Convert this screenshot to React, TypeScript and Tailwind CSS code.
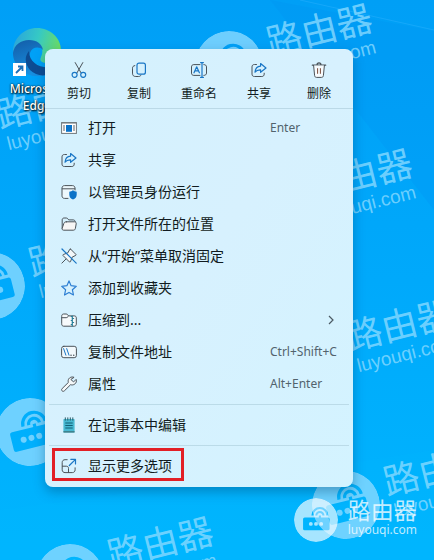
import type { ReactNode } from "react";

interface MenuEntry {
  label: string;
  icon: ReactNode;
  shortcut?: string;
  submenu?: boolean;
  highlighted?: boolean;
}

function Icon({ children, size = 16 }: { children: ReactNode; size?: number }) {
  return (
    <svg
      width={size}
      height={size}
      viewBox="0 0 16 16"
      fill="none"
      stroke="#4b5359"
      strokeWidth="1"
      strokeLinecap="round"
      strokeLinejoin="round"
      className="shrink-0"
      aria-hidden="true"
    >
      {children}
    </svg>
  );
}

const CutIcon = () => (
  <Icon>
    <path d="M4.2 .6 10 10.8M11.8 .6 6 10.8" />
    <g stroke="#1976c5" strokeWidth="1.2">
      <circle cx="3.6" cy="12.8" r="2.5" />
      <circle cx="12.2" cy="12.8" r="2.5" />
    </g>
  </Icon>
);

const CopyIcon = () => (
  <Icon>
    <path d="M3.8 3.6C2.2 3.8 1.5 4.7 1.5 6.2v4.9c0 2.3 1 3.4 3.3 3.4h2.8c1.2 0 2-.5 2.4-1.4" />
    <rect x="6" y="1.2" width="8.4" height="11" rx="2" stroke="#1976c5" strokeWidth="1.2" />
  </Icon>
);

const RenameIcon = () => (
  <Icon>
    <path d="M9 2.6H2.8C1.4 2.6.5 3.5.5 4.9v6.2c0 1.4.9 2.3 2.3 2.3H9M12.8 2.6c1.8 0 2.7.9 2.7 2.3v6.2c0 1.4-.9 2.3-2.7 2.3" />
    <g stroke="#1976c5" strokeWidth="1.2">
      <path d="M3 10.8 5.7 4.8 8.4 10.8M3.9 8.8h3.6M11 .6v14.8M9.6 .6h2.8M9.6 15.4h2.8" />
    </g>
  </Icon>
);

const ShareIcon = () => (
  <Icon>
    <path d="M5.5 2.5H3.4C1.9 2.5 1 3.4 1 4.9v7.2c0 1.5.9 2.4 2.4 2.4h7.4c1.5 0 2.4-.9 2.4-2.4v-.9" />
    <path
      d="M9.6 1.5 15 6 9.6 10.3V7.8C7 7.7 5.3 8.3 4 10.2 4.3 6.4 6.2 4.3 9.6 4.1Z"
      stroke="#1976c5"
      strokeWidth="1.2"
    />
  </Icon>
);

const DeleteIcon = () => (
  <Icon>
    <path d="M1.3 3.2h13.4M6 3C6 1.6 6.8.8 8 .8s2 .8 2 2.2" strokeWidth="1.2" />
    <path d="m2.6 3.4 1 10.1c.1 1.2.8 1.9 2 1.9h4.8c1.2 0 1.9-.7 2-1.9l1-10.1" fill="#f7fbfd" />
    <path d="M6.6 6.6v4.8M9.4 6.6v4.8" stroke="#7a4a38" />
  </Icon>
);

const OpenIcon = () => (
  <Icon>
    <rect x=".6" y="2.6" width="14.8" height="10.8" fill="#fff" stroke="#6f777b" strokeLinejoin="miter" />
    <path d="M1 3h14" stroke="#6f777b" />
    <rect x="5" y="5" width="6" height="6.8" fill="#0873c9" stroke="none" />
    <path d="M2.5 6h1M2.5 8h1M2.5 10h1M12.5 6h1M12.5 8h1M12.5 10h1" />
  </Icon>
);

const AdminIcon = () => (
  <Icon>
    <path
      d="M7 14.4H3.6C2 14.4 1 13.4 1 11.8V4.2c0-1.6 1-2.6 2.6-2.6h7.8c1.6 0 2.6 1 2.6 2.6V6"
      fill="#edf8fc"
    />
    <path d="M1.2 4.8H13.8" />
    <path
      d="M12 6.3c1 .9 2.2 1.4 3.7 1.5v3c0 2.3-1.4 3.8-3.7 4.7-2.3-.9-3.7-2.4-3.7-4.7v-3c1.5-.1 2.7-.6 3.7-1.5Z"
      fill="#0b72c7"
      stroke="none"
    />
  </Icon>
);

const FolderIcon = () => (
  <Icon>
    <path d="M1.2 12.5V3.9c0-1.2.8-1.9 1.9-1.9h2.2c.7 0 1.2.3 1.6.9l.8 1h4.6c1.2 0 1.9.8 1.9 1.9" />
    <path
      d="M5.3 5.8h8.2c1.2 0 1.9.8 1.7 2l-.8 4.6c-.2 1.2-1 1.8-2.1 1.8H2.7c-1.2 0-1.8-.8-1.5-2l1.6-4.7c.4-1.1 1.2-1.7 2.5-1.7Z"
      fill="#f7f6f5"
    />
  </Icon>
);

const UnpinIcon = () => (
  <Icon>
    <path
      d="m9.7 1.2 5.2 5.2c.3.4.2.8-.2 1l-3.5 1.7-1.7 4.5c-.2.6-.7.7-1.1.3L2.1 7.6c-.4-.4-.3-.9.3-1.1l4.5-1.7 1.8-3.4c.2-.4.6-.5 1-.2Z"
      fill="#f3f7f9"
    />
    <path d="M5 11 .9 15.1" />
    <path d="m1 1 14.2 14.2" stroke="#1976c5" strokeWidth="1.2" />
  </Icon>
);

const StarIcon = () => (
  <Icon>
    <path
      d="m8 .9 2.1 4.8 5.2.6-3.9 3.5 1.1 5.2L8 12.4 3.5 15l1.1-5.2L.7 6.3l5.2-.6Z"
      stroke="#2d7fd3"
      strokeWidth="1.2"
    />
  </Icon>
);

const ZipIcon = () => (
  <Icon>
    <path
      d="M.7 4c0-1.300.8-2 2-2h2.400c.8 0 1.300.3 1.700.9l.8 1h5.700c1.300 0 2 .8 2 2v6.300c0 1.300-.8 2-2 2H2.700c-1.200 0-2-.8-2-2Z"
      fill="#f7fafb"
    />
    <path d="M1 5.700h4c1.200 0 1.800-.7 2.500-1.600" />
    <path
      d="M11.300 4v10M10.200 4.500h1M11.300 6.500h1.300M10.200 8.500h1M11.300 10.500h1.300M10.200 12.500h1"
      stroke="#267f9a"
      strokeWidth="1.2"
    />
  </Icon>
);

const PathIcon = () => (
  <Icon>
    <rect x=".6" y="2.3" width="14.8" height="11.4" rx="2.2" fill="#f2f9fc" />
    <path d="m2.600 4.600 2.300 6.600M5.700 4.600 8 11.200" stroke="#1976c5" />
    <path d="M10 11.200h.1M12.700 11.200h.1" strokeWidth="1.4" />
  </Icon>
);

const WrenchIcon = () => (
  <Icon>
    <path
      d="M12.700 1.200c-2.300-.9-5.200.6-5.500 3.300-.1.700 0 1.300.2 1.900L1.200 12.500c-.8.8-.8 1.700-.2 2.300.7.700 1.700.7 2.400 0L9.600 8.700c2.600.9 5.600-.8 5.800-3.600 0-.6 0-1.200-.3-1.700l-2.500 2.500-2.500-2.200Z"
      fill="#f5f8f9"
    />
  </Icon>
);

const NotepadIcon = () => (
  <Icon>
    <rect x="2.4" y="2" width="11.2" height="13.5" rx=".7" fill="#48b9d2" stroke="none" />
    <path d="M2.400 14.200h11.200v1.300H2.400Z" fill="#3b7378" stroke="none" />
    <path d="M4.300 .8v2.400M6.800 .8v2.400M9.300 .8v2.400M11.800 .8v2.400" stroke="#285c67" />
    <path d="M4.700 6h6.600M4.700 8.500h6.600M4.700 11h6.600" stroke="#116077" />
  </Icon>
);

const MoreIcon = () => (
  <Icon>
    <path d="M6.200 1.700H4C2.300 1.700 1.200 2.800 1.200 4.500v7.300c0 1.700 1.100 2.800 2.800 2.800h7.300c1.700 0 2.800-1.100 2.800-2.800v-2" />
    <path d="M1.400 8.200h3.900c1.400 0 2.200.8 2.200 2.200v4" />
    <path d="M8.300 7.500 14.500 1.300M9.800 1.300h4.700V6" stroke="#1976c5" strokeWidth="1.2" />
  </Icon>
);

const actions: MenuEntry[] = [
  { label: "剪切", icon: <CutIcon /> },
  { label: "复制", icon: <CopyIcon /> },
  { label: "重命名", icon: <RenameIcon /> },
  { label: "共享", icon: <ShareIcon /> },
  { label: "删除", icon: <DeleteIcon /> },
];

const groups: MenuEntry[][] = [
  [
    { label: "打开", icon: <OpenIcon />, shortcut: "Enter" },
    { label: "共享", icon: <ShareIcon /> },
    { label: "以管理员身份运行", icon: <AdminIcon /> },
    { label: "打开文件所在的位置", icon: <FolderIcon /> },
    { label: "从“开始”菜单取消固定", icon: <UnpinIcon /> },
    { label: "添加到收藏夹", icon: <StarIcon /> },
    { label: "压缩到...", icon: <ZipIcon />, submenu: true },
    { label: "复制文件地址", icon: <PathIcon />, shortcut: "Ctrl+Shift+C" },
    { label: "属性", icon: <WrenchIcon />, shortcut: "Alt+Enter" },
  ],
  [{ label: "在记事本中编辑", icon: <NotepadIcon /> }],
  [{ label: "显示更多选项", icon: <MoreIcon />, highlighted: true }],
];

function RouterBadge({ size }: { size: number }) {
  return (
    <svg width={size} height={size} viewBox="0 0 68 68" className="shrink-0" aria-hidden="true">
      <mask id="router-cutout">
        <circle cx="34" cy="34" r="34" fill="#fff" />
        <rect x="14" y="30" width="41" height="20" rx="2.5" fill="#000" />
        <path
          d="M28.500 27a11.500 11.500 0 0 1 23 0M34.500 27a5.500 5.500 0 0 1 11 0M40 27v4"
          fill="none"
          stroke="#000"
          strokeWidth="3.2"
        />
        <circle cx="26" cy="40" r="3" fill="#fff" />
        <circle cx="34" cy="40" r="3" fill="#fff" />
        <circle cx="42" cy="40" r="3" fill="#fff" />
      </mask>
      <circle cx="34" cy="34" r="34" fill="currentColor" mask="url(#router-cutout)" />
    </svg>
  );
}

const marks = [
  "left-[195px] top-[31px]",
  "left-[235px] top-[176px]",
  "left-[275px] top-[326px]",
  "left-[312px] top-[471px]",
  "left-[-4px] top-[398px]",
  "left-[36px] top-[544px]",
  "left-[-43px] top-[252px]",
  "left-[-75px] top-[104px]",
];

function WallpaperMark({ place }: { place: string }) {
  return (
    <div
      className={`absolute flex w-max origin-[34px_34px] -rotate-14 items-center gap-2 text-[#8adaff]/80 ${place}`}
    >
      <RouterBadge size={68} />
      <div className="flex flex-col items-center whitespace-nowrap">
        <span className="text-[36px] leading-9">路由器</span>
        <span className="font-['Liberation_Sans',sans-serif] text-[19px] leading-6">luyouqi.com</span>
      </div>
    </div>
  );
}

function EdgeLogo() {
  return (
    <svg width="48" height="48" viewBox="0 0 48 48" aria-hidden="true">
      <defs>
        <linearGradient id="edge-top" x1="0" y1="0.3" x2="1" y2="0.5">
          <stop offset="0" stopColor="#2aa5dc" />
          <stop offset=".5" stopColor="#36c9c4" />
          <stop offset="1" stopColor="#6cdc62" />
        </linearGradient>
        <linearGradient id="edge-left" x1="0" y1="0" x2="0.3" y2="1">
          <stop offset="0" stopColor="#135ca7" />
          <stop offset="1" stopColor="#178fe0" />
        </linearGradient>
      </defs>
      <path d="M0 24C0 10 11 0 24 0s24 10 24 22c0 8-6 13-13 13-6 0-9-2-7-6 4-8-1-15-10-15C9 14 3 18 0 24Z" fill="url(#edge-top)" />
      <path d="M0 25C1 17 8 12 16 12c8 0 13 4 14 10-4-4-11-3-13 3-3 9 4 18 15 22C15 52 0 40 0 25Z" fill="url(#edge-left)" />
      <path d="M16 23c-5 6-4 13 1 19 6 6 15 7 21 3 4-2 6-5 7-8-13 6-29 0-29-14Z" fill="#0d4c94" />
    </svg>
  );
}

function DesktopShortcut() {
  return (
    <button type="button" className="absolute left-0 top-7 flex w-[74px] flex-col items-center gap-1">
      <span className="relative">
        <EdgeLogo />
        <svg width="13" height="13" viewBox="0 0 13 13" className="absolute bottom-0 left-0" aria-hidden="true">
          <path d="M0 0h13v13H0Z" fill="#fff" />
          <path d="M3 10 9 4M5 3.500h4.500V8" fill="none" stroke="#1d6fb8" strokeWidth="1.8" />
        </svg>
      </span>
      <span className="text-[12px] font-medium leading-[17px] text-white [text-shadow:1px_1px_2px_#000,0_0_2px_#000]">
        Microsoft
        <br />
        Edge
      </span>
    </button>
  );
}

function MenuRow({ entry }: { entry: MenuEntry }) {
  return (
    <button
      type="button"
      role="menuitem"
      aria-haspopup={entry.submenu ? "menu" : undefined}
      className="relative flex h-8 w-full items-center gap-[11px] px-4 text-left"
    >
      {entry.icon}
      <span className="flex-1 whitespace-nowrap text-[14px] leading-5 text-[#111b20]">{entry.label}</span>
      {entry.shortcut && (
        <span className="w-[67px] whitespace-nowrap text-[12px] leading-5 text-[#52636d]">{entry.shortcut}</span>
      )}
      {entry.submenu && (
        <svg width="10" height="10" viewBox="0 0 10 10" aria-hidden="true">
          <path d="m2 1 4 4-4 4" fill="none" stroke="#4c5b64" strokeWidth="1.2" />
        </svg>
      )}
      {entry.highlighted && (
        <span className="absolute -top-0.5 left-[7px] h-[33px] w-[132px] border-3 border-[#e21f26]" />
      )}
    </button>
  );
}

function ContextMenu() {
  return (
    <div
      role="menu"
      className="relative w-full max-w-[308px] overflow-hidden rounded-lg bg-linear-to-br from-[#d4f1fd] via-[#d7f1fe] to-[#d3f3ff] shadow-[0_5px_12px_rgba(0,55,95,0.35)]"
    >
      <div className="flex h-[60px] border-b border-[#bbd9e7] px-1">
        {actions.map((action) => (
          <button
            key={action.label}
            type="button"
            role="menuitem"
            className="flex flex-1 flex-col items-center gap-1.5 pt-[13px] text-[12px] leading-5 text-[#111b20]"
          >
            {action.icon}
            {action.label}
          </button>
        ))}
      </div>
      <div className="pb-[5px] pt-[3px]">
        {groups.map((group, i) => (
          <div key={i}>
            {i > 0 && <hr className="mx-1 my-1 border-[#bbdbe8]" />}
            {group.map((entry) => (
              <MenuRow key={entry.label} entry={entry} />
            ))}
          </div>
        ))}
      </div>
    </div>
  );
}

function SiteLogo() {
  return (
    <div className="absolute bottom-[18px] right-[17px] flex items-center gap-2.5 text-white/65">
      <RouterBadge size={44} />
      <div className="flex flex-col whitespace-nowrap pb-1 text-white/75">
        <span className="text-[23px] leading-6">路由器</span>
        <span className="text-[12px] leading-4">luyouqi.com</span>
      </div>
    </div>
  );
}

export default function App() {
  return (
    <main className="relative min-h-screen overflow-hidden bg-linear-to-b from-[#009ff6] via-[#00a9fb] to-[#00b5fe] pb-10 pl-[45px] pr-4 pt-[49px] font-['Noto_Sans','Noto_Sans_CJK_SC',sans-serif]">
      <svg
        className="absolute inset-0 h-full w-full"
        viewBox="0 0 434 560"
        preserveAspectRatio="none"
        aria-hidden="true"
      >
        <path d="M270 0 434 31V210Z" fill="#008ef0" opacity=".2" />
        <path d="m300 0 134 30" stroke="#33b3ff" opacity=".4" />
        <path d="m352 463 82-13v110H0v-50Z" fill="#00bbff" opacity=".2" />
      </svg>
      {marks.map((place) => (
        <WallpaperMark key={place} place={place} />
      ))}
      <DesktopShortcut />
      <ContextMenu />
      <SiteLogo />
    </main>
  );
}
